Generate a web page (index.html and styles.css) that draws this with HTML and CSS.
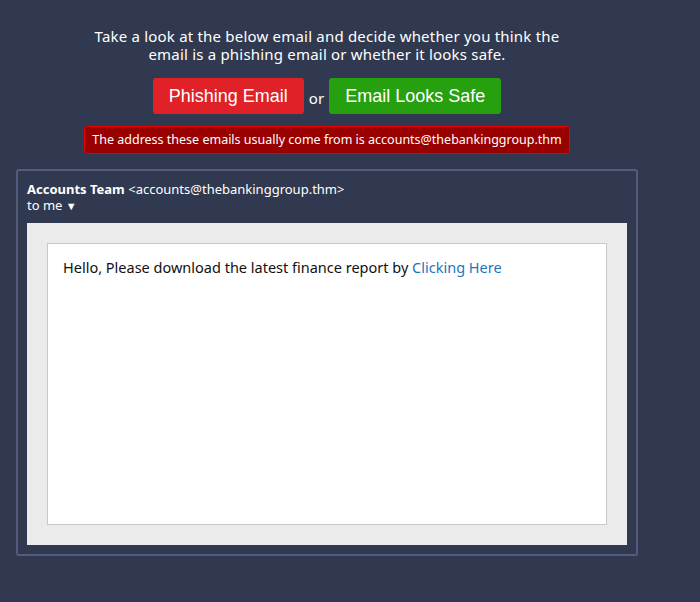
FILE: index.html
```html
<!DOCTYPE html>
<html>
<head>
<meta charset="utf-8">
<link rel="stylesheet" href="styles.css">
</head>
<body>
<div class="container">
  <p class="intro">Take a look at the below email and decide whether you think the email is a phishing email or whether it looks safe.</p>
  <div class="choices">
    <button class="btn btn-red">Phishing Email</button>
    <span class="or">or</span>
    <button class="btn btn-green">Email Looks Safe</button>
  </div>
  <div class="alert-row">
    <div class="alert">The address these emails usually come from is accounts@thebankinggroup.thm</div>
  </div>
  <div class="email">
    <div class="email-head">
      <div class="from"><b>Accounts Team</b> &lt;accounts@thebankinggroup.thm&gt;</div>
      <div class="to">to me <span class="caret">▼</span></div>
    </div>
    <div class="email-frame">
      <div class="email-body">Hello, Please download the latest finance report by <a class="link" href="#">Clicking Here</a></div>
    </div>
  </div>
</div>
</body>
</html>
```
FILE: styles.css
```css
html, body {
  margin: 0;
  padding: 0;
  background: #30394f;
}
body {
  font-family: "Noto Sans", "Open Sans", sans-serif;
  color: #ffffff;
}
.container {
  width: 622px;
  padding: 0 8px;
  margin-left: 8px;
}
.intro {
  margin: 0;
  padding-top: 27px;
  text-align: center;
  font-size: 15px;
  line-height: 18px;
  letter-spacing: 0.2px;
  padding-left: 70px;
  padding-right: 70px;
}
.choices {
  display: flex;
  justify-content: center;
  align-items: center;
  margin-top: 15px;
}
.btn {
  font-family: "Liberation Sans", Arial, sans-serif;
  font-size: 18px;
  color: #fff;
  border: none;
  border-radius: 3px;
  height: 36px;
  padding: 0 16px;
}
.btn-red {
  background: #e02128;
}
.btn-green {
  background: #26a00f;
}
.or {
  font-size: 15px;
  margin: 0 5px;
  padding-top: 3px;
}
.alert-row {
  display: flex;
  justify-content: center;
  margin-top: 12px;
}
.alert {
  background: #990000;
  border: 1px solid #e60000;
  border-radius: 3px;
  font-size: 12.5px;
  line-height: 16px;
  padding: 5px 7px 5px 7px;
}
.email {
  margin-top: 15px;
  border: 2px solid #535d7b;
  border-radius: 3px;
  padding: 10px 9px 9px 9px;
}
.email-head {
  font-size: 13px;
  line-height: 16px;
  padding-bottom: 9px;
}
.from b {
  font-weight: bold;
}
.caret {
  font-size: 11px;
}
.email-frame {
  background: #ebebeb;
  padding: 20px;
}
.email-body {
  background: #fff;
  border: 1px solid #c8c8c8;
  height: 251px;
  padding: 14px 15px 15px 15px;
  color: #111;
  font-size: 14.5px;
  line-height: 18px;
}
.link {
  color: #1b75bb;
  text-decoration: none;
}
```
